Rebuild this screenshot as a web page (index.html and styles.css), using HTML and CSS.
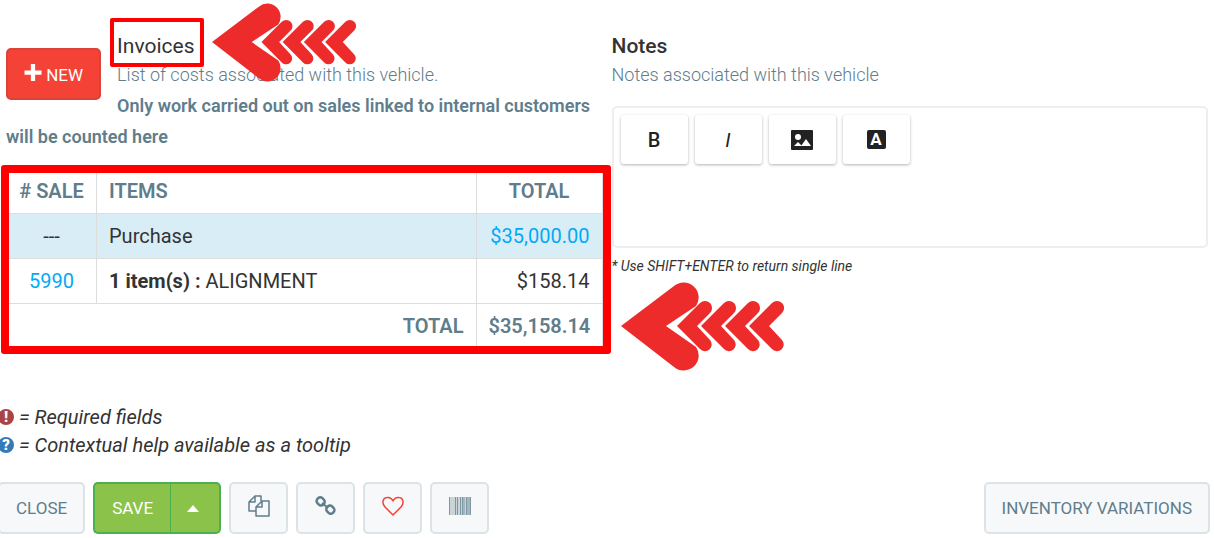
FILE: index.html
```
<!DOCTYPE html>
<html lang="en">
<head>
  <meta charset="UTF-8">
  <meta name="viewport" content="width=device-width, initial-scale=1">
  <title>Vehicle - Invoices and Notes</title>
  <link rel="stylesheet" href="styles.css">
</head>
<body>
  <!-- shared arrow shape -->
  <svg class="defs" aria-hidden="true">
    <symbol id="arrow" viewBox="0 0 163 89">
      <path d="M0 44L53 4A15 15 0 0 1 75 24L45 44L75 65A15 15 0 0 1 53 85Z"/>
      <path id="chevron" d="M56 44L79 21A6.500 6.500 0 0 1 89 31L76 44L89 58A6.500 6.500 0 0 1 79 67Z"/>
      <use href="#chevron" x="24"/>
      <use href="#chevron" x="48"/>
      <use href="#chevron" x="72"/>
    </symbol>
  </svg>

  <main class="columns">
    <section class="invoices">
      <button type="button" class="btn btn-new">
        <svg viewBox="0 0 16 16"><path d="M6 0h4v6h6v4h-6v6H6v-6H0V6h6z" fill="#fff"/></svg>
        NEW
      </button>
      <h2><span class="marked">Invoices<svg class="arrow arrow-title"><use href="#arrow"/></svg></span></h2>
      <p class="subtitle">List of costs associated with this vehicle.</p>
      <p class="warning">Only work carried out on sales linked to internal customers will be counted here</p>

      <div class="table-box">
        <table>
          <thead>
            <tr><th class="col-sale"># SALE</th><th class="col-items">ITEMS</th><th class="col-total">TOTAL</th></tr>
          </thead>
          <tbody>
            <tr class="info"><td class="center">---</td><td>Purchase</td><td class="right"><a href="#">$35,000.00</a></td></tr>
            <tr><td class="center"><a href="#">5990</a></td><td><b>1 item(s) :</b> ALIGNMENT</td><td class="right">$158.14</td></tr>
          </tbody>
          <tfoot>
            <tr><th colspan="2" class="right">TOTAL</th><th class="right">$35,158.14</th></tr>
          </tfoot>
        </table>
        <svg class="arrow arrow-table"><use href="#arrow"/></svg>
      </div>
    </section>

    <section class="notes">
      <h2><label for="notes">Notes</label></h2>
      <p class="subtitle">Notes associated with this vehicle</p>
      <div class="editor">
        <div class="toolbar">
          <button type="button" class="tool bold">B</button>
          <button type="button" class="tool italic">I</button>
          <button type="button" class="tool" aria-label="Image">
            <svg viewBox="0 0 22 20"><rect width="22" height="20" rx="1" fill="#222"/><circle cx="7" cy="7" r="3" fill="#fff"/><path d="M3 16l4-4 2 2 2 2zM10 16l5-7 5 7z" fill="#fff"/></svg>
          </button>
          <button type="button" class="tool" aria-label="Font"><span class="font-icon">A</span></button>
        </div>
        <textarea id="notes" rows="3"></textarea>
      </div>
      <p class="hint">* Use SHIFT+ENTER to return single line</p>
    </section>
  </main>

  <footer>
    <ul class="legend">
      <li><span class="badge required">!</span> = Required fields</li>
      <li><span class="badge help">?</span> = Contextual help available as a tooltip</li>
    </ul>
    <div class="actions">
      <button type="button" class="btn">CLOSE</button>
      <div class="btn-group">
        <button type="button" class="btn btn-save">SAVE</button>
        <button type="button" class="btn btn-save btn-caret" aria-label="More save options">
          <svg viewBox="0 0 12 7"><path d="M0 7L6 0l6 7z" fill="#fff"/></svg>
        </button>
      </div>
      <button type="button" class="btn btn-icon" aria-label="Copy">
        <svg viewBox="0 0 22 22" fill="none" stroke="#607d8b" stroke-width="1.500" stroke-linejoin="round"><path d="M8 16H1V7l6-6h6v5M7 1v6H1"/><path d="M8 12l6-6h7v15H8zM14 6v6H8"/></svg>
      </button>
      <button type="button" class="btn btn-icon" aria-label="Link">
        <svg viewBox="0 0 22 22" fill="none" stroke="#607d8b" stroke-width="2.500"><rect x="-4" y="-3" width="8" height="7" rx="3" transform="translate(6 6) rotate(45)"/><rect x="-4" y="-4" width="8" height="7" rx="3" transform="translate(15 15) rotate(45)"/><path d="M7 8l6 5" stroke-width="2"/></svg>
      </button>
      <button type="button" class="btn btn-icon" aria-label="Favorite">
        <svg viewBox="0 0 22 22" fill="none" stroke="#f44336" stroke-width="1.500" stroke-linejoin="round"><path d="M11 20L3 12C0 9 0 3 5 2.500C8 2 10 4 11 6C12 4 14 2 17 2.500C22 3 22 9 19 12Z"/></svg>
      </button>
      <button type="button" class="btn btn-icon" aria-label="Barcode">
        <svg viewBox="0 0 22 22" fill="#607d8b"><path d="M0 2h22v18H0z" opacity=".3"/><path d="M0 2h1v18H0zM6 2h1v18H6zM8 2h1v18H8zM11 2h1v18h-1zM13 2h1v18h-1zM17 2h1v18h-1zM21 2h1v18h-1z" opacity=".7"/><path d="M14 2h2v18h-2zM18 2h3v18h-3z" opacity=".35"/></svg>
      </button>
      <button type="button" class="btn btn-variations">INVENTORY VARIATIONS</button>
    </div>
  </footer>
</body>
</html>
```
FILE: styles.css
```
* {
  box-sizing: border-box;
}
body {
  margin: 0;
  background: #fff;
  color: #333;
  font-family: Roboto, sans-serif;
  font-size: 20px;
  overflow-x: hidden;
}
h2, p {
  margin: 0;
}
a {
  color: #03a9f4;
  text-decoration: none;
}
button, textarea {
  font-family: inherit;
}
.defs {
  position: absolute;
  width: 0;
  height: 0;
}
.columns {
  display: grid;
  grid-template-columns: 1fr 1fr;
  gap: 9px;
  padding: 32px 6px 0;
}
h2 {
  font-size: 21px;
  line-height: 28px;
  font-weight: 500;
}
.invoices h2 {
  font-weight: 400;
}
.subtitle {
  color: #607d8b;
  font-size: 18px;
  line-height: 30px;
  font-weight: 300;
}
.warning {
  color: #607d8b;
  font-size: 18px;
  line-height: 31px;
  font-weight: 600;
}

/* buttons */
.btn {
  height: 52px;
  padding: 0 16px;
  border: 2px solid #dce3e6;
  border-radius: 5px;
  background: #f6f8fa;
  color: #607d8b;
  font-size: 17px;
  cursor: pointer;
}
.btn-new {
  float: left;
  margin: 16px 16px 0 0;
  border-color: #d9433a;
  background: #f44336;
  color: #fff;
}
.btn-new svg {
  width: 18px;
  height: 17px;
}
.btn-save {
  border-color: #4caf50;
  background: #8bc34a;
  color: #fff;
}
.btn-icon {
  width: 59px;
}
.btn-icon svg {
  width: 22px;
  height: 22px;
}
.btn-group {
  display: flex;
}
.btn-group .btn:first-child {
  padding: 0 17px;
  border-right: 0;
  border-radius: 5px 0 0 5px;
}
.btn-caret {
  width: 51px;
  border-left-width: 1px;
  border-radius: 0 5px 5px 0;
}
.btn-caret svg {
  display: block;
  width: 12px;
  height: 7px;
}
.btn-variations {
  margin-left: auto;
}

/* red highlights */
.marked {
  position: relative;
}
.marked::before {
  content: "";
  position: absolute;
  inset: -16px -10px -9px -7px;
  border: 4px solid #f00;
  border-radius: 2px;
}
.arrow {
  position: absolute;
  z-index: 2;
  fill: #ee2b2b;
  pointer-events: none;
}
.arrow-title {
  left: 95px;
  top: -31px;
  width: 144px;
  height: 79px;
}
.arrow-table {
  left: 615px;
  top: 114px;
  width: 163px;
  height: 89px;
}
.table-box {
  position: relative;
  margin-top: 16px;
}
.table-box::after {
  content: "";
  position: absolute;
  inset: -3px -8px -5px -5px;
  border: 8px solid #f00;
  border-radius: 3px;
  pointer-events: none;
}

/* invoices */
table {
  width: 100%;
  border-collapse: collapse;
  table-layout: fixed;
}
th, td {
  height: 45px;
  padding: 0 12px;
  border: 1px solid #ddd;
  text-align: left;
}
th {
  color: #607d8b;
  font-weight: 600;
}
.col-sale {
  width: 90px;
  text-align: center;
}
.col-total {
  width: 126px;
  text-align: center;
}
.center {
  text-align: center;
}
.right {
  text-align: right;
}
.info {
  background: #d9edf7;
}

/* notes */
.editor {
  margin-top: 16px;
  padding: 7px;
  border: 2px solid #eee;
  border-radius: 5px;
}
.toolbar {
  display: flex;
  gap: 7px;
}
.tool {
  display: flex;
  align-items: center;
  justify-content: center;
  width: 67px;
  height: 49px;
  padding: 0;
  border: 0;
  border-radius: 3px;
  background: #fff;
  box-shadow: 0 1px 3px rgba(0,0,0,0.3);
  color: #222;
  font-size: 20px;
}
.bold {
  font-weight: 500;
}
.italic {
  font-style: italic;
}
.tool svg {
  width: 22px;
  height: 20px;
}
.font-icon {
  width: 19px;
  height: 19px;
  border-radius: 2px;
  background: #222;
  color: #fff;
  font-size: 17px;
  line-height: 19px;
  font-weight: 700;
}
textarea {
  display: block;
  width: 100%;
  height: 75px;
  padding: 8px;
  border: 0;
  outline: none;
  background: none;
  resize: none;
  font-size: 18px;
}
.hint {
  margin-top: 8px;
  font-size: 14px;
  line-height: 20px;
  font-style: italic;
}

/* footer */
footer {
  margin: 54px 4px 4px -2px;
}
.legend {
  margin: 0;
  padding: 0;
  list-style: none;
  font-style: italic;
  line-height: 28px;
}
.legend li {
  display: flex;
  align-items: center;
  gap: 5px;
}
.badge {
  width: 16px;
  height: 16px;
  border-radius: 50%;
  color: #fff;
  font-size: 15px;
  line-height: 16px;
  font-style: normal;
  font-weight: 900;
  text-align: center;
}
.required {
  background: #a94442;
}
.help {
  background: #337ab7;
}
.actions {
  display: flex;
  gap: 8px;
  margin-top: 23px;
}
```
